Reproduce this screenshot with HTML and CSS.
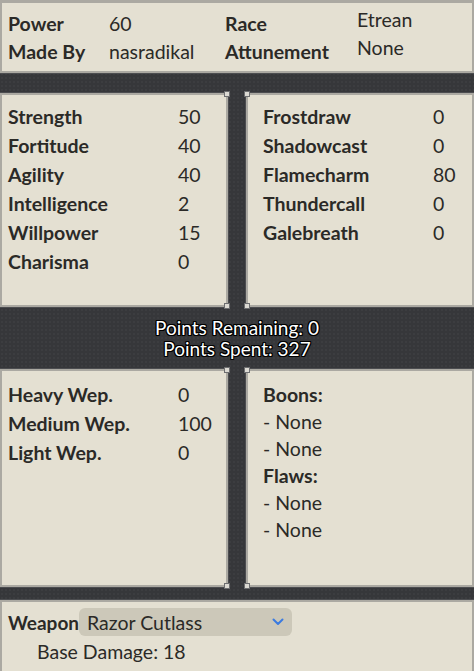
FILE: index.html
```html
<!DOCTYPE html>
<html>
<head>
    <title>Build Sheet</title>
    <link rel="stylesheet" href="styles.css">
</head>
<body>
    <div class="panel header">
        <span class="label">Power</span>
        <span class="value">60</span>
        <span class="label">Race</span>
        <span class="value raised">Etrean</span>
        <span class="label">Made By</span>
        <span class="value">nasradikal</span>
        <span class="label">Attunement</span>
        <span class="value raised">None</span>
    </div>

    <div class="band"></div>

    <div class="split">
        <div class="panel stats left">
            <span class="label">Strength</span><span class="value">50</span>
            <span class="label">Fortitude</span><span class="value">40</span>
            <span class="label">Agility</span><span class="value">40</span>
            <span class="label">Intelligence</span><span class="value">2</span>
            <span class="label">Willpower</span><span class="value">15</span>
            <span class="label">Charisma</span><span class="value">0</span>
        </div>
        <div class="panel stats right">
            <span class="label">Frostdraw</span><span class="value">0</span>
            <span class="label">Shadowcast</span><span class="value">0</span>
            <span class="label">Flamecharm</span><span class="value">80</span>
            <span class="label">Thundercall</span><span class="value">0</span>
            <span class="label">Galebreath</span><span class="value">0</span>
        </div>
    </div>

    <div class="points">
        <div>Points Remaining: 0</div>
        <div>Points Spent: 327</div>
    </div>

    <div class="split lower">
        <div class="panel stats left weapons">
            <span class="label">Heavy Wep.</span><span class="value">0</span>
            <span class="label">Medium Wep.</span><span class="value">100</span>
            <span class="label">Light Wep.</span><span class="value">0</span>
        </div>
        <div class="panel traits right">
            <div class="label">Boons:</div>
            <div>- None</div>
            <div>- None</div>
            <div class="label">Flaws:</div>
            <div>- None</div>
            <div>- None</div>
        </div>
    </div>

    <div class="band small"></div>

    <div class="panel footer">
        <div class="weapon-row">
            <span class="label">Weapon</span>
            <div class="select">
                <span>Razor Cutlass</span>
                <svg width="12" height="8" viewBox="0 0 12 8"><polyline points="1.5,1.5 6,6 10.5,1.5" fill="none" stroke="#3b7be0" stroke-width="2" stroke-linecap="round" stroke-linejoin="round"/></svg>
            </div>
        </div>
        <div class="damage">Base Damage: 18</div>
    </div>
</body>
</html>
```
FILE: styles.css
```css
body {
    margin: 0;
    background-color: #36373a;
    background-image: radial-gradient(rgba(255, 255, 255, 0.03) 1px, transparent 1px);
    background-size: 4px 4px;
    font-family: Lato, "Liberation Sans", sans-serif;
    font-size: 19.5px;
    color: #2b2a27;
}
.panel {
    background-color: #e4e0d2;
    border: 2px solid #aba9a2;
    box-shadow: 0 0 0 1px #4c4d50;
    box-sizing: border-box;
    position: relative;
}
/* little ornaments where the panels meet the divider */
.split .panel::before,
.split .panel::after {
    content: "";
    position: absolute;
    width: 4px;
    height: 4px;
    background-color: #dcdad3;
    border: 1px solid #6d6e70;
}
.split .left::before { top: -4px; right: -4px; }
.split .left::after { bottom: -4px; right: -4px; }
.split .right::before { top: -4px; left: -4px; }
.split .right::after { bottom: -4px; left: -4px; }
.label {
    font-weight: 700;
}
.header {
    height: 73px;
    border-top-width: 3px;
    padding: 7px 0 0 6px;
    display: grid;
    grid-template-columns: 101px 116px 132px auto;
    align-content: start;
    line-height: 28px;
}
.header .raised {
    margin-top: -4px;
}
.band {
    height: 20px;
}
.band.small {
    height: 13px;
}
.split {
    display: grid;
    grid-template-columns: 1fr 1fr;
    gap: 18px;
    height: 214px;
}
.split.lower {
    height: 218px;
}
.stats {
    display: grid;
    grid-template-columns: 170px auto;
    grid-auto-rows: 29px;
    align-content: start;
    line-height: 29px;
    padding: 7px 0 0 6px;
}
.stats.right {
    padding-left: 15px;
}
.stats.weapons {
    padding-top: 9px;
}
.traits {
    line-height: 27px;
    padding: 10px 0 0 15px;
}
.points {
    height: 62px;
    display: flex;
    flex-direction: column;
    justify-content: center;
    align-items: center;
    font-size: 19px;
    line-height: 21px;
    color: #ffffff;
    text-shadow: -1px -1px 0 #000, 1px -1px 0 #000, -1px 1px 0 #000, 1px 1px 0 #000, 0 1px 0 #000, 0 -1px 0 #000, 1px 0 0 #000, -1px 0 0 #000;
}
.footer {
    height: 80px;
    border-bottom: none;
    padding: 6px 0 0 6px;
}
.weapon-row {
    display: flex;
    align-items: center;
    font-size: 19px;
}
.select {
    width: 213px;
    height: 28px;
    box-sizing: border-box;
    background-color: #ccc8b9;
    border-radius: 6px;
    display: flex;
    align-items: center;
    justify-content: space-between;
    padding: 0 8px 0 8px;
    font-size: 19.5px;
}
.damage {
    padding-left: 29px;
    margin-top: 3px;
    line-height: 26px;
}
```
